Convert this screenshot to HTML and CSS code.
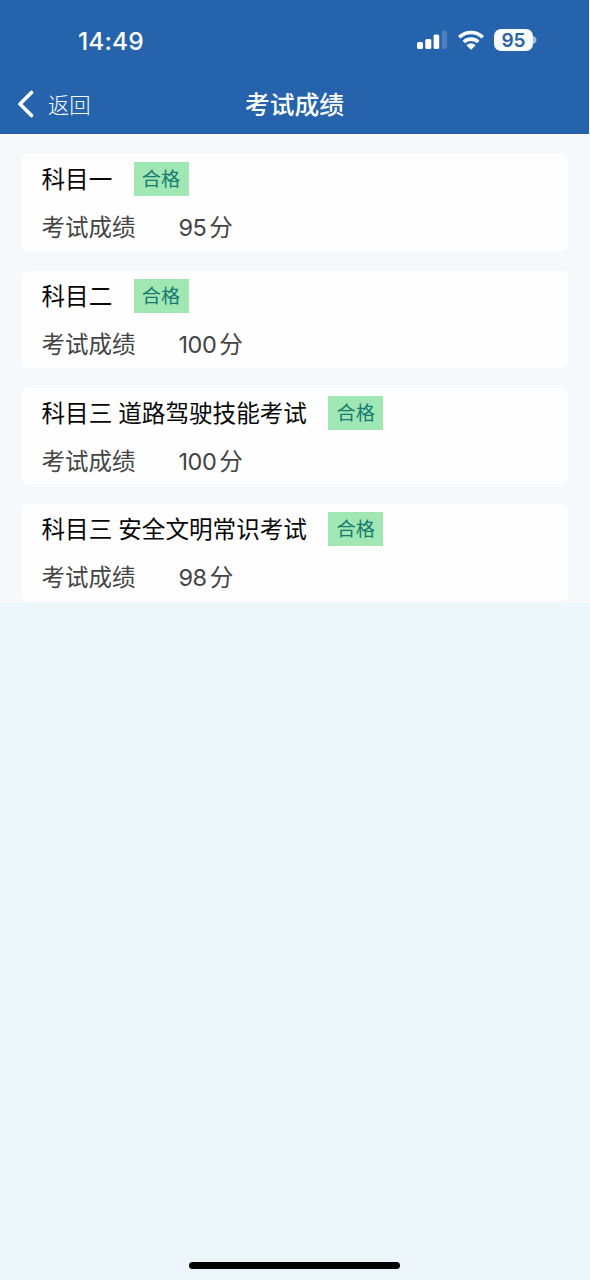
FILE: index.html
```html
<!DOCTYPE html>
<html lang="zh-CN">
<head>
<meta charset="utf-8">
<title>考试成绩</title>
<link rel="stylesheet" href="styles.css">
</head>
<body>
<div class="screen">
  <header class="header">
    <div class="status">
      <span class="time">14:49</span>
      <div class="indicators">
        <svg class="signal" width="30" height="20" viewBox="0 0 30 20">
          <rect x="0" y="12" width="6" height="7" rx="1.5"/>
          <rect x="8.3" y="9" width="6" height="10" rx="1.5"/>
          <rect x="16.6" y="4.5" width="5.6" height="14.5" rx="1.5"/>
          <rect class="dim" x="25" y="0.5" width="5" height="18.5" rx="1.5"/>
        </svg>
        <svg class="wifi" width="28" height="21" viewBox="0 0 28 21">
          <path class="arc" d="M2.2 7.3C9 .9 19 .9 25.8 7.3"/>
          <path class="arc" d="M6.8 12C11 8.2 17 8.2 21.2 12"/>
          <path d="M9.4 15.3C12 13 16 13 18.6 15.3L14.7 19.3Q14 20 13.3 19.3Z"/>
        </svg>
        <span class="battery">95</span>
        <svg class="cap" width="4" height="8" viewBox="0 0 4 8"><path d="M0 0Q3.5 1 3.5 4T0 8Z"/></svg>
      </div>
    </div>
    <nav class="nav">
      <a class="back">
        <svg width="18" height="28" viewBox="0 0 18 28"><path d="M14.5 2.5L3 14L14.5 25.5"/></svg>
        <span>返回</span>
      </a>
      <h1 class="title">考试成绩</h1>
    </nav>
  </header>
  <main class="results">
    <section class="card">
      <div class="subject"><span class="name">科目一</span><span class="badge">合格</span></div>
      <div class="score"><span class="label">考试成绩</span><span class="num">95</span><span>分</span></div>
    </section>
    <section class="card">
      <div class="subject"><span class="name">科目二</span><span class="badge">合格</span></div>
      <div class="score"><span class="label">考试成绩</span><span class="num">100</span><span>分</span></div>
    </section>
    <section class="card">
      <div class="subject"><span class="name">科目三 道路驾驶技能考试</span><span class="badge">合格</span></div>
      <div class="score"><span class="label">考试成绩</span><span class="num">100</span><span>分</span></div>
    </section>
    <section class="card">
      <div class="subject"><span class="name">科目三 安全文明常识考试</span><span class="badge">合格</span></div>
      <div class="score"><span class="label">考试成绩</span><span class="num">98</span><span>分</span></div>
    </section>
  </main>
  <footer class="footer"><div class="home-bar"></div></footer>
</div>
</body>
</html>
```
FILE: styles.css
```css
* { box-sizing: border-box; }
body {
  margin: 0;
  background: #edf6fa;
  font-family: Inter, "Noto Sans CJK SC", sans-serif;
}
.screen {
  display: flex;
  flex-direction: column;
  height: 1280px;
}
.header {
  height: 134px;
  margin-right: 1px;
  background: #2563ac;
  border-bottom: 1px solid #2b5b98;
  color: #fff;
}
.status {
  display: flex;
  justify-content: space-between;
  align-items: center;
  height: 80px;
  padding: 0 52px 0 78px;
}
.time {
  font-size: 24.5px;
  font-weight: 500;
  line-height: 30px;
  letter-spacing: 0.1px;
  padding-top: 1px;
}
.indicators { display: flex; align-items: center; }
.signal { fill: #fff; margin-right: 10px; }
.signal .dim { fill: #4d80be; }
.wifi { fill: #fff; margin-right: 9px; }
.wifi .arc { fill: none; stroke: #fff; stroke-width: 3.6; }
.battery {
  width: 39px;
  height: 22px;
  margin-right: -1px;
  border-radius: 7px;
  background: #f8fcff;
  color: #2d61a0;
  font-size: 19px;
  font-weight: 600;
  line-height: 23px;
  text-align: center;
}
.cap { fill: #9bbce0; margin-left: 1px; }
.nav {
  display: grid;
  grid-template-columns: 1fr auto 1fr;
  align-items: center;
  height: 48px;
}
.back {
  display: flex;
  align-items: center;
  gap: 13px;
  padding-left: 17px;
  font-size: 21.3px;
  font-weight: 300;
  line-height: 30px;
}
.back span { padding-top: 1px; }
.back svg {
  fill: none;
  stroke: #fff;
  stroke-width: 3.6;
  stroke-linecap: round;
  stroke-linejoin: round;
}
.title {
  margin: 0;
  padding-top: 1px;
  font-size: 24.8px;
  font-weight: 500;
  line-height: 34px;
}
.results {
  display: flex;
  flex-direction: column;
  gap: 20px;
  padding: 20px 22px 2px 21px;
  background: #f6f8fb;
}
.card {
  height: 96.75px;
  padding: 8px 20.5px 0;
  border-radius: 7px;
  background: #fefefe;
}
.subject {
  display: flex;
  align-items: center;
  gap: 21.3px;
  height: 34px;
  font-size: 23.6px;
  line-height: 34px;
  color: #080808;
  white-space: nowrap;
}
.name {
  padding-top: 2px;
  word-spacing: -0.7px;
}
.badge {
  width: 55px;
  height: 34px;
  background: #a0e7b4;
  color: #167a70;
  font-size: 19.3px;
  line-height: 34px;
  text-align: center;
}
.score {
  display: flex;
  align-items: center;
  height: 34px;
  margin-top: 15px;
  font-size: 23.5px;
  line-height: 34px;
  color: #444;
}
.label { width: 137px; }
.num {
  margin-right: 3px;
  letter-spacing: -0.5px;
}
.footer {
  display: flex;
  flex: 1;
  justify-content: center;
  align-items: flex-end;
  padding: 0 1px 11px 0;
}
.home-bar {
  width: 211px;
  height: 7px;
  border-radius: 4px;
  background: #000;
}
```
